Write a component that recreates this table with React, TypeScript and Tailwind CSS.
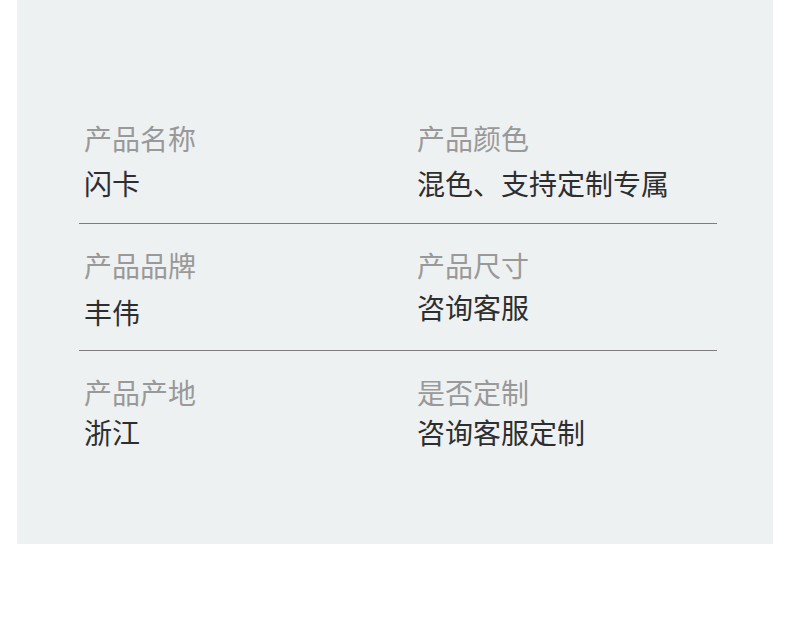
import React from "react";

interface Spec {
  label: string;
  value: string;
  gap: string;
}

// 每行两列：名称 + 值
const rows: { specs: Spec[]; rowClass: string }[] = [
  {
    specs: [
      { label: "产品名称", value: "闪卡", gap: "mt-[5px]" },
      { label: "产品颜色", value: "混色、支持定制专属", gap: "mt-[5px]" },
    ],
    rowClass: "pb-[20px] border-b border-[#7d7d7d]",
  },
  {
    specs: [
      { label: "产品品牌", value: "丰伟", gap: "mt-[7px]" },
      { label: "产品尺寸", value: "咨询客服", gap: "mt-[2px]" },
    ],
    rowClass: "pt-[21px] pb-[18px] border-b border-[#7d7d7d]",
  },
  {
    specs: [
      { label: "产品产地", value: "浙江", gap: "mt-0" },
      { label: "是否定制", value: "咨询客服定制", gap: "mt-0" },
    ],
    rowClass: "pt-[21px]",
  },
];

const App: React.FC = () => {
  return (
    <div
      className="w-[790px] h-[623px] bg-white"
      style={{ fontFamily: '"Noto Sans CJK SC", "Noto Sans", sans-serif' }}
    >
      <div className="ml-[17px] w-[756px] h-[544px] bg-[#eef1f2] pl-[62px] pr-[56px] pt-[118px]">
        {rows.map((row, i) => (
          <div key={i} className={`grid grid-cols-[333px_1fr] ${row.rowClass}`}>
            {row.specs.map((s) => (
              <div key={s.label} className="pl-[5px]">
                <div className="text-[28px] leading-10 text-[#999999]">{s.label}</div>
                <div className={`text-[28px] leading-10 text-[#2e2e2e] ${s.gap}`}>{s.value}</div>
              </div>
            ))}
          </div>
        ))}
      </div>
    </div>
  );
};

export default App;
